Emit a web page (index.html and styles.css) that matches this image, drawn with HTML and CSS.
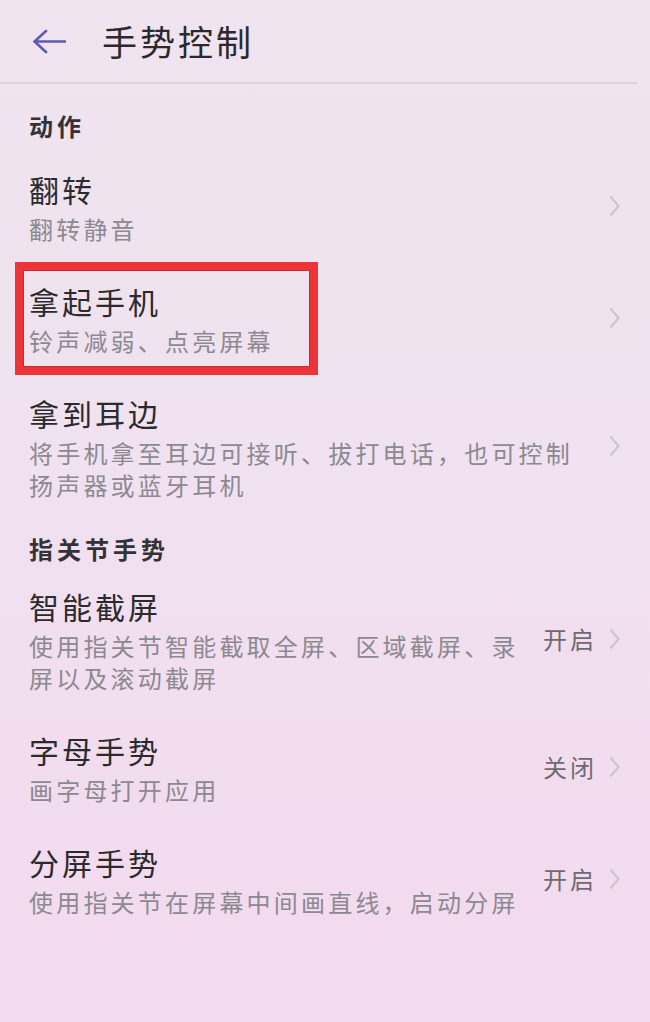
FILE: index.html
```html
<!DOCTYPE html>
<html lang="zh-CN">
<head>
<meta charset="utf-8">
<title>手势控制</title>
<link rel="stylesheet" href="styles.css">
</head>
<body>
<div class="screen">
  <header class="topbar">
    <svg class="back" width="34" height="26" viewBox="0 0 34 26" aria-hidden="true">
      <path d="M33 12.5 H3 M14 2 L2.5 12.5 L14 23" fill="none" stroke="#5d5cb4" stroke-width="2.6" stroke-linecap="round" stroke-linejoin="round"/>
    </svg>
    <h1 class="title">手势控制</h1>
  </header>

  <div class="section first">动作</div>

  <div class="row">
    <div class="text">
      <div class="name">翻转</div>
      <div class="desc">翻转静音</div>
    </div>
    <div class="side">
      <svg class="chev" width="11" height="22" viewBox="0 0 11 22" aria-hidden="true"><path d="M1.5 1.5 L9.5 11 L1.5 20.5" fill="none" stroke="#cbc3cb" stroke-width="2"/></svg>
    </div>
  </div>

  <div class="row">
    <div class="highlight"></div>
    <div class="text">
      <div class="name">拿起手机</div>
      <div class="desc">铃声减弱、点亮屏幕</div>
    </div>
    <div class="side">
      <svg class="chev" width="11" height="22" viewBox="0 0 11 22" aria-hidden="true"><path d="M1.5 1.5 L9.5 11 L1.5 20.5" fill="none" stroke="#cbc3cb" stroke-width="2"/></svg>
    </div>
  </div>

  <div class="row">
    <div class="text">
      <div class="name">拿到耳边</div>
      <div class="desc">将手机拿至耳边可接听、拔打电话，也可控制扬声器或蓝牙耳机</div>
    </div>
    <div class="side">
      <svg class="chev" width="11" height="22" viewBox="0 0 11 22" aria-hidden="true"><path d="M1.5 1.5 L9.5 11 L1.5 20.5" fill="none" stroke="#cbc3cb" stroke-width="2"/></svg>
    </div>
  </div>

  <div class="section">指关节手势</div>

  <div class="row">
    <div class="text">
      <div class="name">智能截屏</div>
      <div class="desc">使用指关节智能截取全屏、区域截屏、录屏以及滚动截屏</div>
    </div>
    <div class="side">
      <span class="status">开启</span>
      <svg class="chev" width="11" height="22" viewBox="0 0 11 22" aria-hidden="true"><path d="M1.5 1.5 L9.5 11 L1.5 20.5" fill="none" stroke="#cbc3cb" stroke-width="2"/></svg>
    </div>
  </div>

  <div class="row">
    <div class="text">
      <div class="name">字母手势</div>
      <div class="desc">画字母打开应用</div>
    </div>
    <div class="side">
      <span class="status">关闭</span>
      <svg class="chev" width="11" height="22" viewBox="0 0 11 22" aria-hidden="true"><path d="M1.5 1.5 L9.5 11 L1.5 20.5" fill="none" stroke="#cbc3cb" stroke-width="2"/></svg>
    </div>
  </div>

  <div class="row">
    <div class="text">
      <div class="name">分屏手势</div>
      <div class="desc">使用指关节在屏幕中间画直线，启动分屏</div>
    </div>
    <div class="side">
      <span class="status">开启</span>
      <svg class="chev" width="11" height="22" viewBox="0 0 11 22" aria-hidden="true"><path d="M1.5 1.5 L9.5 11 L1.5 20.5" fill="none" stroke="#cbc3cb" stroke-width="2"/></svg>
    </div>
  </div>
</div>
</body>
</html>
```

FILE: styles.css
```css
html, body {
  margin: 0;
  padding: 0;
}

body {
  width: 650px;
  height: 1022px;
  overflow: hidden;
  font-family: "Noto Sans CJK SC", "Noto Sans", sans-serif;
  background: linear-gradient(180deg, #efe4ef 0%, #f0e2f0 45%, #f2dcef 80%, #f3dbef 100%);
  color: #2c2a2d;
}

.screen {
  width: 650px;
  height: 1022px;
  display: flex;
  flex-direction: column;
}

.topbar {
  height: 82px;
  display: flex;
  align-items: center;
  padding-left: 32px;
  margin-right: 13px;
  border-bottom: 2px solid #ddd1dc;
  box-sizing: content-box;
}

.back {
  display: block;
  margin-top: 2px;
}

.title {
  margin: 0 0 0 36px;
  font-size: 35px;
  font-weight: 400;
  letter-spacing: 3px;
  line-height: 44px;
  color: #2b292c;
}

.section {
  padding: 15px 29px 2px;
  font-size: 24px;
  line-height: 32px;
  font-weight: 700;
  letter-spacing: 4px;
  color: #353236;
}

.section.first {
  padding-top: 26px;
  padding-bottom: 8px;
}

.row {
  position: relative;
  display: flex;
  align-items: center;
  padding: 17px 30px 17px 29px;
  gap: 18px;
}

.text {
  flex: 1;
  min-width: 0;
}

.name {
  font-size: 30px;
  line-height: 44px;
  letter-spacing: 3px;
  color: #2c2a2d;
}

.desc {
  margin-top: 2px;
  font-size: 24px;
  line-height: 32px;
  letter-spacing: 3.2px;
  color: #8d8990;
}

.side {
  display: flex;
  align-items: center;
  gap: 12px;
}

.status {
  font-size: 24px;
  line-height: 32px;
  letter-spacing: 3px;
  color: #6f6a71;
}

.chev {
  display: block;
}

.highlight {
  position: absolute;
  left: 15px;
  top: 0;
  width: 303px;
  height: 113px;
  box-sizing: border-box;
  border: 8px solid #ec3439;
  box-shadow: inset 0 0 0 1px #c92a30;
  pointer-events: none;
}
```
